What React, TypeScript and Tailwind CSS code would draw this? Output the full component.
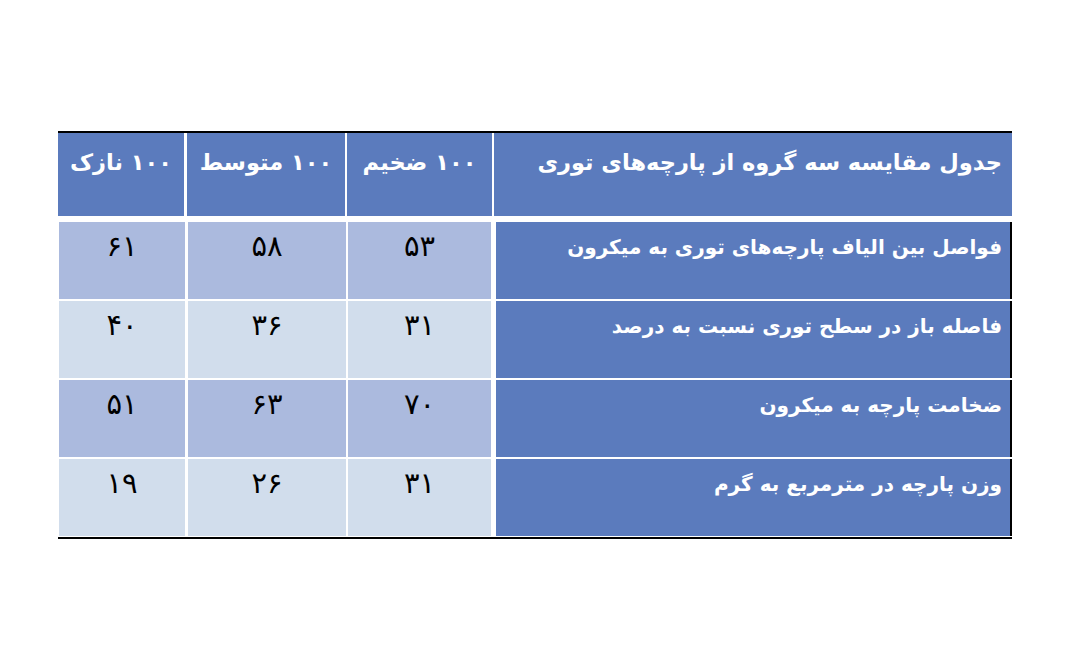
const header = {
  label: "جدول مقایسه سه گروه از پارچه‌های توری",
  cols: ["۱۰۰ ضخیم", "۱۰۰ متوسط", "۱۰۰ نازک"],
};

const rows = [
  { label: "فواصل بین الیاف پارچه‌های توری به میکرون", values: ["۵۳", "۵۸", "۶۱"], shade: "bg-[#abbade]" },
  { label: "فاصله باز در سطح توری نسبت به درصد", values: ["۳۱", "۳۶", "۴۰"], shade: "bg-[#d1ddec]" },
  { label: "ضخامت پارچه به میکرون", values: ["۷۰", "۶۳", "۵۱"], shade: "bg-[#abbade]" },
  { label: "وزن پارچه در مترمربع به گرم", values: ["۳۱", "۲۶", "۱۹"], shade: "bg-[#d1ddec]" },
];

// widths of the three number columns, right to left
const colWidths = ["w-[143px]", "w-[158px]", "w-[126px]"];
const colGaps = ["ml-[2px]", "ml-[3px]", ""];

export default function App() {
  return (
    <div className="min-h-screen bg-white pt-[131px] pl-[58px]" style={{ fontFamily: '"DejaVu Sans", sans-serif' }}>
      <div dir="rtl" className="w-[954px]">
        <div className="h-[2px] bg-black" />

        {/* Header */}
        <div className="flex h-[83px]">
          <div className="w-[518px] ml-[2px] bg-[#5b7bbd] px-[10px] pt-[13px] text-[22.5px] font-bold text-white leading-[32px]">
            {header.label}
          </div>
          {header.cols.map((c, i) => (
            <div
              key={c}
              className={`${i === 0 ? "w-[145px]" : colWidths[i]} ${colGaps[i]} bg-[#5b7bbd] pt-[13px] text-center text-[22.5px] font-bold text-white leading-[32px]`}
            >
              {c}
            </div>
          ))}
        </div>

        {/* Body */}
        <div className="mt-[6px] flex flex-col gap-[2px]">
          {rows.map((r) => (
            <div key={r.label} className="flex h-[77px]">
              <div className="w-[516px] ml-[5px] border-r-[2px] border-black bg-[#5b7bbd] px-[8px] pt-[10px] text-[20px] font-bold text-white leading-[30px]">
                {r.label}
              </div>
              {r.values.map((v, i) => (
                <div
                  key={i}
                  className={`${colWidths[i]} ${colGaps[i]} ${r.shade} pt-[6px] text-center text-[29px] font-normal text-black leading-[36px]`}
                >
                  {v}
                </div>
              ))}
            </div>
          ))}
        </div>

        <div className="mt-[1px] h-[2px] bg-black" />
      </div>
    </div>
  );
}
